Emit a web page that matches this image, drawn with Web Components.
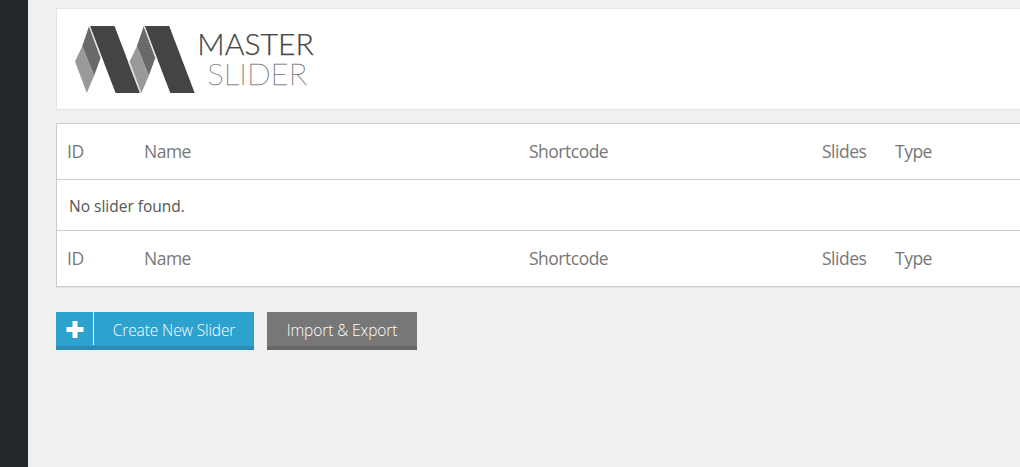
<!DOCTYPE html>
<html lang="en">
<head>
<meta charset="utf-8">
<title>Master Slider</title>
<style>
  html, body {
    height: 100%;
    margin: 0;
    overflow: hidden;
    background: #f0f0f0;
    font-family: "Open Sans", "Noto Sans", sans-serif;
  }
</style>
</head>
<body>
<slider-admin>
  <slider-logo slot="header"></slider-logo>
  <slider-table></slider-table>
  <panel-button slot="actions" kind="create">Create New Slider</panel-button>
  <panel-button slot="actions">Import &amp; Export</panel-button>
</slider-admin>

<template id="admin-tmpl">
  <style>
    :host {
      display: flex;
      height: 100vh;
    }
    aside {
      flex: 0 0 28px;
      background: #23282d;
    }
    main {
      flex: 1;
      min-width: 0;
      padding: 8px 0 0 28px;
    }
    header {
      box-sizing: border-box;
      height: 102px;
      margin-bottom: 13px;
      border: 1px solid #e3e3e3;
      border-right: 0;
      background: #fff;
    }
    .actions {
      display: flex;
      gap: 13px;
      margin-top: 25px;
    }
  </style>
  <aside></aside>
  <main>
    <header><slot name="header"></slot></header>
    <slot></slot>
    <div class="actions"><slot name="actions"></slot></div>
  </main>
</template>

<template id="logo-tmpl">
  <style>
    :host { display: block; padding: 15px 0 0 17px; }
    svg { display: block; }
    text { font-family: Lato, sans-serif; }
  </style>
  <svg width="244" height="72" viewBox="74 24 244 72" role="img" aria-label="Master Slider">
    <defs>
      <!-- one folded ribbon, drawn twice -->
      <g id="fold">
        <path fill="#999" d="M82.3 46 75 61.5 86.8 93 94.2 75.5z"/>
        <path fill="#696969" d="M89 26.3 82.3 46 94.2 75.5 100.6 58z"/>
        <path fill="#444" d="M90 26h24.5L140 93h-24.4z"/>
        <path fill="none" stroke="#ddd" stroke-width="1.2" d="M89.6 26.6 101.3 58"/>
      </g>
    </defs>
    <use href="#fold"/>
    <path fill="none" stroke="#ddd" stroke-width="1.5" d="M129 62.5 140.8 93"/>
    <use href="#fold" x="54.7"/>
    <text x="197.3" y="55.3" font-size="29.5" font-weight="300" fill="#484848" stroke="#484848" stroke-width=".25" textLength="116.5" lengthAdjust="spacingAndGlyphs">MASTER</text>
    <text x="207.2" y="85" font-size="29.5" font-weight="100" fill="#777" stroke="#777" stroke-width=".35" textLength="100" lengthAdjust="spacingAndGlyphs">SLIDER</text>
  </svg>
</template>

<template id="table-tmpl">
  <style>
    :host {
      display: block;
      border: 1px solid #ccc;
      border-right: 0;
      background: #fff;
      box-shadow: 0 1px 1px rgba(0, 0, 0, .06);
    }
    .head {
      display: grid;
      grid-template-columns: 77px 385px 293px 73px 1fr;
      box-sizing: border-box;
      height: 55px;
      padding: 0 0 2px 10px;
      align-items: center;
      color: #777;
      font-size: 17.5px;
      letter-spacing: -.5px;
    }
    .empty {
      box-sizing: border-box;
      display: flex;
      align-items: center;
      height: 52px;
      padding: 2px 12px 0;
      border: solid #ccc;
      border-width: 1px 0;
      color: #555;
      font-size: 15.5px;
    }
  </style>
  <div class="head"><span>ID</span><span>Name</span><span>Shortcode</span><span>Slides</span><span>Type</span></div>
  <div class="empty">No slider found.</div>
  <div class="head"><span>ID</span><span>Name</span><span>Shortcode</span><span>Slides</span><span>Type</span></div>
</template>

<template id="button-tmpl">
  <style>
    :host {
      box-sizing: border-box;
      display: flex;
      width: 150px;
      height: 38px;
      border-bottom: 4px solid #666;
      background: #777;
      color: #fff;
      font-size: 15.5px;
      font-weight: 300;
      letter-spacing: -.1px;
      line-height: 37px;
      white-space: nowrap;
    }
    :host([kind="create"]) {
      width: 198px;
      border-color: #2a8cb4;
      background: #2ea2cf;
    }
    .icon { display: none; }
    :host([kind="create"]) .icon {
      display: block;
      flex: 0 0 37px;
      height: 33px;
      border-right: 1px solid #fff;
    }
    .icon svg { display: block; }
    .label {
      flex: 1;
      text-align: center;
    }
  </style>
  <span class="icon">
    <svg width="37" height="33" fill="#fff"><path d="M16.5 9h5v6h6v5h-6v6h-5v-6h-6v-5h6z"/></svg>
  </span>
  <span class="label"><slot></slot></span>
</template>

<script>
  // every element only clones its own template
  function define(name, templateId) {
    customElements.define(name, class extends HTMLElement {
      connectedCallback() {
        if (this.shadowRoot) return;
        const tmpl = document.getElementById(templateId);
        this.attachShadow({mode: 'open'}).append(tmpl.content.cloneNode(true));
      }
    });
  }

  define('slider-admin', 'admin-tmpl');
  define('slider-logo', 'logo-tmpl');
  define('slider-table', 'table-tmpl');
  define('panel-button', 'button-tmpl');
</script>
</body>
</html>
